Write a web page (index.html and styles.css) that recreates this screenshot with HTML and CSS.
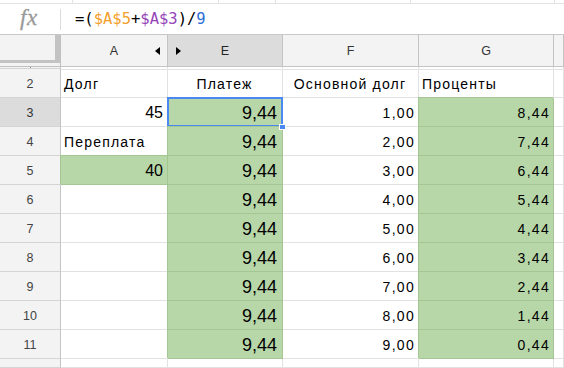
FILE: index.html
```html
<!DOCTYPE html>
<html lang="ru">
<head>
<meta charset="utf-8">
<link rel="stylesheet" href="styles.css">
</head>
<body>
<div class="app">
  <div class="topstrip">
    <div class="ts" style="width:73px"></div>
    <div class="ts" style="width:146px"></div>
    <div class="ts" style="width:57px"></div>
    <div class="ts" style="width:135px"></div>
    <div class="ts" style="width:144px"></div>
    <div class="ts last"></div>
  </div>
  <div class="fbar">
    <span class="fx">fx</span>
    <span class="sep"></span>
    <span class="formula">=(<span class="ref1">$A$5</span>+<span class="ref2">$A$3</span>)/<span class="num">9</span></span>
  </div>
  <div class="grid">
    <!-- header -->
    <div class="corner"><div class="freeze"></div></div>
    <div class="ch">A<svg class="arr arr-l" width="5" height="8" viewBox="0 0 5 8"><polygon points="5,0 5,8 0,4" fill="#000"/></svg></div>
    <div class="ch sel">E<svg class="arr arr-r" width="5" height="8" viewBox="0 0 5 8"><polygon points="0,0 0,8 5,4" fill="#000"/></svg></div>
    <div class="ch">F</div>
    <div class="ch">G</div>
    <div class="ch"></div>

    <!-- row 1 stub -->
    <div class="rh stub"><span class="tick"></span></div>
    <div class="c"></div><div class="c"></div><div class="c"></div><div class="c"></div><div class="c"></div>

    <!-- row 2 -->
    <div class="rh">2</div>
    <div class="c t">Долг</div>
    <div class="c t ctr">Платеж</div>
    <div class="c t ctr">Основной долг</div>
    <div class="c t">Проценты</div>
    <div class="c"></div>

    <!-- row 3 -->
    <div class="rh sel">3</div>
    <div class="c n big16">45</div>
    <div class="c g n big">9,44<span class="selbox"></span><span class="handle"></span></div>
    <div class="c n">1,00</div>
    <div class="c g n">8,44</div>
    <div class="c"></div>

    <!-- row 4 -->
    <div class="rh">4</div>
    <div class="c t">Переплата</div>
    <div class="c g n big">9,44</div>
    <div class="c n">2,00</div>
    <div class="c g n">7,44</div>
    <div class="c"></div>

    <!-- row 5 -->
    <div class="rh">5</div>
    <div class="c g n big16">40</div>
    <div class="c g n big">9,44</div>
    <div class="c n">3,00</div>
    <div class="c g n">6,44</div>
    <div class="c"></div>

    <div class="rh">6</div>
    <div class="c"></div>
    <div class="c g n big">9,44</div>
    <div class="c n">4,00</div>
    <div class="c g n">5,44</div>
    <div class="c"></div>

    <div class="rh">7</div>
    <div class="c"></div>
    <div class="c g n big">9,44</div>
    <div class="c n">5,00</div>
    <div class="c g n">4,44</div>
    <div class="c"></div>

    <div class="rh">8</div>
    <div class="c"></div>
    <div class="c g n big">9,44</div>
    <div class="c n">6,00</div>
    <div class="c g n">3,44</div>
    <div class="c"></div>

    <div class="rh">9</div>
    <div class="c"></div>
    <div class="c g n big">9,44</div>
    <div class="c n">7,00</div>
    <div class="c g n">2,44</div>
    <div class="c"></div>

    <div class="rh">10</div>
    <div class="c"></div>
    <div class="c g n big">9,44</div>
    <div class="c n">8,00</div>
    <div class="c g n">1,44</div>
    <div class="c"></div>

    <div class="rh">11</div>
    <div class="c"></div>
    <div class="c g n big">9,44</div>
    <div class="c n">9,00</div>
    <div class="c g n">0,44</div>
    <div class="c"></div>

    <div class="rh"></div>
    <div class="c"></div>
    <div class="c"></div>
    <div class="c"></div>
    <div class="c"></div>
    <div class="c"></div>
  </div>
</div>
</body>
</html>
```
FILE: styles.css
```css
* { box-sizing: border-box; }
html, body {
  margin: 0;
  padding: 0;
  width: 564px;
  height: 368px;
  overflow: hidden;
  background: #fff;
  font-family: "Liberation Sans", Arial, sans-serif;
}
.app {
  display: flex;
  flex-direction: column;
  height: 368px;
}
.topstrip {
  display: flex;
  height: 4px;
  border-bottom: 1px solid #e3e3e3;
}
.ts {
  height: 3px;
  border-right: 1px solid #e3e3e3;
  flex: none;
}
.ts.last { flex: 1; border-right: none; }

.fbar {
  display: flex;
  align-items: center;
  height: 31px;
  border-bottom: 1px solid #c8c8c8;
  flex: none;
}
.fx {
  font-family: "Liberation Serif", "Times New Roman", serif;
  font-style: italic;
  font-size: 23px;
  color: #999;
  width: 60px;
  padding-left: 20px;
  margin-top: -2px;
  letter-spacing: 0.5px;
  -webkit-text-stroke: 0.3px #999;
}
.sep {
  width: 1px;
  height: 21px;
  background: #dcdcdc;
  flex: none;
}
.formula {
  font-family: "DejaVu Sans Mono", monospace;
  font-size: 15.5px;
  color: #000;
  padding-left: 14px;
  margin-top: -1px;
}
.ref1 { color: #f4a02c; }
.ref2 { color: #9446b8; }
.num { color: #2f6fd6; }

.grid {
  flex: 1;
  display: grid;
  grid-template-columns: 61px 107px 115px 136px 135px 1fr;
  grid-template-rows: 32px 2px repeat(10, 29px) 1fr;
}
.corner {
  background: #f3f3f3;
  border-right: 1px solid #c0c0c0;
  border-bottom: 1px solid #c0c0c0;
  position: relative;
}
.freeze {
  width: 60px;
  height: 28px;
  border-right: 5px solid #c3c3c3;
  border-bottom: 3px solid #c3c3c3;
}
.ch {
  background: #f3f3f3;
  border-right: 1px solid #c4c4c4;
  border-bottom: 1px solid #c4c4c4;
  display: flex;
  align-items: center;
  justify-content: center;
  font-size: 12.5px;
  color: #333;
  position: relative;
  padding-top: 1px;
}
.ch.sel { background: #dcdcdc; color: #222; }
.arr { position: absolute; top: 12px; }
.arr-l { right: 7px; }
.arr-r { left: 8px; }

.rh {
  background: #f3f3f3;
  border-right: 1px solid #c4c4c4;
  border-bottom: 1px solid #d4d4d4;
  display: flex;
  align-items: center;
  justify-content: center;
  font-size: 12.5px;
  color: #444;
  padding-top: 1px;
}
.rh.sel { background: #dcdcdc; color: #333; }
.rh.stub { position: relative; }
.tick {
  position: absolute;
  left: 30px;
  top: 0;
  width: 1px;
  height: 1px;
  background: #888;
}

.c {
  border-right: 1px solid #e2e2e2;
  border-bottom: 1px solid #e2e2e2;
  display: flex;
  align-items: center;
  font-size: 14px;
  color: #000;
  padding: 2px 4px 0 3px;
  white-space: nowrap;
  position: relative;
}
.c.t { letter-spacing: 1.2px; }
.c.ctr { justify-content: center; }
.c.n { justify-content: flex-end; letter-spacing: 1.3px; padding-right: 3px; }
.c.big { font-size: 18px; letter-spacing: 0; padding-right: 5px; }
.c.big16 { font-size: 16px; letter-spacing: 0; padding-right: 4px; }
.c.g {
  background: #b7d7a8;
  border-right-color: #a3c693;
  border-bottom-color: #a3c693;
  box-shadow: -1px -1px 0 0 #a3c693;
}
.selbox {
  position: absolute;
  left: -1px;
  top: -1px;
  right: -1px;
  bottom: -1px;
  border: 2px solid #4a89f3;
}
.handle {
  position: absolute;
  right: -4px;
  bottom: -4px;
  width: 7px;
  height: 6px;
  background: #4a89f3;
  border: 1px solid #fff;
  z-index: 2;
}
```
